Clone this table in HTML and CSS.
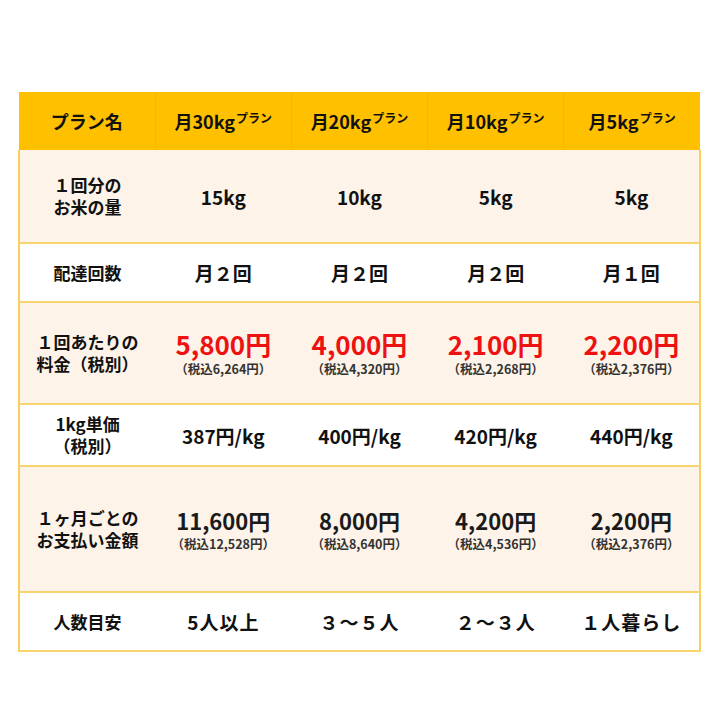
FILE: index.html
```html
<!DOCTYPE html>
<html lang="ja">
<head>
<meta charset="utf-8">
<link rel="stylesheet" href="styles.css">
</head>
<body>
<table class="plan-table">
  <thead>
    <tr class="row-head">
      <th>プラン名</th>
      <th>月30kg<sup>プラン</sup></th>
      <th>月20kg<sup>プラン</sup></th>
      <th>月10kg<sup>プラン</sup></th>
      <th>月5kg<sup>プラン</sup></th>
    </tr>
  </thead>
  <tbody>
    <tr class="row-amount cream">
      <th>１回分の<br>お米の量</th>
      <td>15kg</td><td>10kg</td><td>5kg</td><td>5kg</td>
    </tr>
    <tr class="row-times">
      <th>配達回数</th>
      <td>月２回</td><td>月２回</td><td>月２回</td><td>月１回</td>
    </tr>
    <tr class="row-price cream">
      <th>１回あたりの<br>料金（税別）</th>
      <td><span class="big red">5,800円</span><span class="tax">（税込6,264円）</span></td>
      <td><span class="big red">4,000円</span><span class="tax">（税込4,320円）</span></td>
      <td><span class="big red">2,100円</span><span class="tax">（税込2,268円）</span></td>
      <td><span class="big red">2,200円</span><span class="tax">（税込2,376円）</span></td>
    </tr>
    <tr class="row-unit">
      <th>1kg単価<br>（税別）</th>
      <td>387円/kg</td><td>400円/kg</td><td>420円/kg</td><td>440円/kg</td>
    </tr>
    <tr class="row-monthly cream">
      <th>１ヶ月ごとの<br>お支払い金額</th>
      <td><span class="big mid">11,600円</span><span class="tax">（税込12,528円）</span></td>
      <td><span class="big mid">8,000円</span><span class="tax">（税込8,640円）</span></td>
      <td><span class="big mid">4,200円</span><span class="tax">（税込4,536円）</span></td>
      <td><span class="big mid">2,200円</span><span class="tax">（税込2,376円）</span></td>
    </tr>
    <tr class="row-people">
      <th>人数目安</th>
      <td>5人以上</td><td>３～５人</td><td>２～３人</td><td>１人暮らし</td>
    </tr>
  </tbody>
</table>
</body>
</html>
```

FILE: styles.css
```css
html, body {
  margin: 0;
  padding: 0;
  background: #ffffff;
}

body {
  font-family: "Noto Sans CJK JP", "Noto Sans", sans-serif;
  color: #111111;
}

.plan-table {
  margin: 92px 0 0 18px;
  width: 683px;
  table-layout: fixed;
  border-collapse: collapse;
}

.plan-table th,
.plan-table td {
  padding: 0;
  text-align: center;
  vertical-align: middle;
  font-weight: 700;
}

.row-head {
  height: 58px;
  background: #ffc000;
}

.row-head th {
  font-size: 18px;
  border-right: 1px solid #f2b900;
}

.row-head th:last-child {
  border-right: none;
}

.row-head sup {
  font-size: 12px;
  vertical-align: 6px;
  margin-left: 1px;
}

tbody tr {
  border-left: 2px solid #f8cf5c;
  border-right: 2px solid #f8cf5c;
  border-bottom: 2px solid #f8d46e;
}

tbody th {
  font-size: 17px;
  line-height: 22px;
}

tbody td {
  font-size: 19px;
}

.cream {
  background: #fdf3e8;
}

.row-amount { height: 93px; }
.row-times { height: 59px; }
.row-price { height: 102px; }
.row-unit { height: 62px; }
.row-monthly { height: 126px; }
.row-people { height: 59px; }

.big {
  display: block;
  font-size: 26px;
  line-height: 30px;
}

.red {
  color: #ee1111;
}

.mid {
  font-size: 22px;
  color: #1a1a1a;
  line-height: 28px;
}

.tax {
  display: block;
  margin-top: 2px;
  font-size: 12.5px;
  line-height: 16px;
  color: #333333;
}

.row-people td {
  letter-spacing: 1px;
}
```
